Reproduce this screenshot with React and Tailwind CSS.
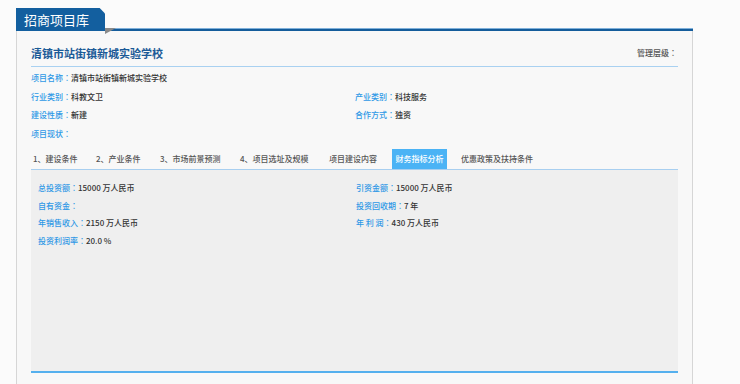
import React from 'react';

const infoRows = [
  [{ label: '项目名称', value: '清镇市站街镇新城实验学校' }, null],
  [{ label: '行业类别', value: '科教文卫' }, { label: '产业类别', value: '科技服务' }],
  [{ label: '建设性质', value: '新建' }, { label: '合作方式', value: '独资' }],
  [{ label: '项目现状', value: '' }, null],
];

const finRows = [
  [{ label: '总投资额', value: '15000 万人民币' }, { label: '引资金额', value: '15000 万人民币' }],
  [{ label: '自有资金', value: '' }, { label: '投资回收期', value: '7 年' }],
  [{ label: '年销售收入', value: '2150 万人民币' }, { label: '年 利 润', value: '430 万人民币' }],
  [{ label: '投资利润率', value: '20.0 %' }, null],
];

const tabs = [
  { text: '1、建设条件', w: 'w-[63px]' },
  { text: '2、产业条件', w: 'w-[64px]' },
  { text: '3、市场前景预测', w: 'w-[80px]' },
  { text: '4、项目选址及规模', w: 'w-[89px]' },
  { text: '项目建设内容', w: 'w-[65px]' },
  { text: '财务指标分析', w: 'w-[55px]', active: true },
  { text: '优惠政策及扶持条件', w: 'ml-[12px]' },
];

const Field = ({ item }) => {
  if (!item) return <div />;
  return (
    <div className="whitespace-nowrap font-medium">
      <span className="text-[#2f98e6]">
        {item.label}
        <span style={{ fontFamily: '"Noto Sans CJK TC", sans-serif' }}>：</span>
      </span>
      <span className="text-[#333]">{item.value}</span>
    </div>
  );
};

export default function App() {
  return (
    <div
      className="w-[740px] h-[384px] overflow-hidden bg-[#fbfbfb] pt-[8px] pl-[16px]"
      style={{ fontFamily: '"Noto Sans CJK SC", "Noto Sans", sans-serif' }}
    >
      {/* header tab + rule */}
      <div className="flex items-end w-[677px]">
        <div className="w-[89px] h-[23px] bg-[#135f9f] text-white text-[13px] leading-[23px] pl-[8px] [clip-path:polygon(0_0,94%_0,100%_24%,100%_100%,0_100%)]">
          招商项目库
        </div>
        <div className="flex-1 flex flex-col">
          <svg width="11" height="6" className="block mb-[-6px] relative">
            <polygon points="0,0 11,0 0,6" fill="#8a8a8a" />
          </svg>
          <div className="h-[1px] bg-[#7fb0da]" />
          <div className="h-[2px] bg-[#145c9b]" />
        </div>
      </div>

      {/* container */}
      <div className="w-[677px] h-[400px] border-l border-r border-[#d6d6d6] bg-[#f8f8f8] pl-[14px] pr-[14px]">
        <div className="flex items-end justify-between h-[36px] pb-[6px] border-b border-[#a9d1f1]">
          <div className="text-[11px] leading-[14px] font-bold text-[#1b5a97]">清镇市站街镇新城实验学校</div>
          <div className="text-[8px] leading-[14px] text-[#555] font-medium pr-[1px]">
            管理层级<span style={{ fontFamily: '"Noto Sans CJK TC", sans-serif' }}>：</span>
          </div>
        </div>

        <div className="pt-[2px] text-[8px] leading-[18.5px]">
          {infoRows.map((row, i) => (
            <div key={i} className="grid grid-cols-[324px_1fr]">
              <Field item={row[0]} />
              <Field item={row[1]} />
            </div>
          ))}
        </div>

        <div className="flex mt-[6px] h-[20px] text-[8px] leading-[20px] text-[#555] font-medium">
          {tabs.map((t) => (
            <div
              key={t.text}
              className={
                t.active
                  ? `${t.w} bg-[#4bb3f5] text-white text-center`
                  : `${t.w} pl-[2px] whitespace-nowrap`
              }
            >
              {t.text}
            </div>
          ))}
        </div>

        <div className="h-[204px] bg-[#efefef] border-t border-[#a8cff0] border-b-2 border-b-[#55b0ee] pt-[9px] pl-[7px] text-[8px] leading-[17.5px]">
          {finRows.map((row, i) => (
            <div key={i} className="grid grid-cols-[318px_1fr]">
              <Field item={row[0]} />
              <Field item={row[1]} />
            </div>
          ))}
        </div>
      </div>
    </div>
  );
}
